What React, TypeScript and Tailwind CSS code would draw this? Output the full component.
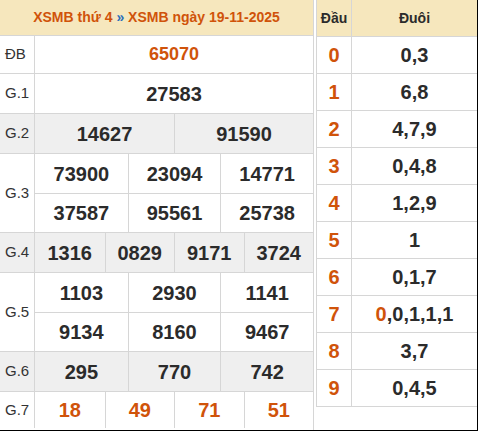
import React from 'react';

const ORANGE = 'text-[#d0530a]';

type Row = { label: string; lines: string[][]; gray?: boolean; red?: boolean; h?: string };

const rows: Row[] = [
  { label: 'ĐB', lines: [['65070']], red: true, h: 'h-[37px]' },
  { label: 'G.1', lines: [['27583']] },
  { label: 'G.2', lines: [['14627', '91590']], gray: true },
  { label: 'G.3', lines: [['73900', '23094', '14771'], ['37587', '95561', '25738']] },
  { label: 'G.4', lines: [['1316', '0829', '9171', '3724']], gray: true },
  { label: 'G.5', lines: [['1103', '2930', '1141'], ['9134', '8160', '9467']] },
  { label: 'G.6', lines: [['295', '770', '742']], gray: true },
  { label: 'G.7', lines: [['18', '49', '71', '51']], red: true, h: 'h-[36px]' },
];

const loto: [string, React.ReactNode][] = [
  ['0', '0,3'],
  ['1', '6,8'],
  ['2', '4,7,9'],
  ['3', '0,4,8'],
  ['4', '1,2,9'],
  ['5', '1'],
  ['6', '0,1,7'],
  ['7', <><span className={ORANGE}>0</span>,0,1,1,1</>],
  ['8', '3,7'],
  ['9', '0,4,5'],
];

const colClass: Record<number, string> = {
  1: 'grid-cols-1',
  2: 'grid-cols-2',
  3: 'grid-cols-3',
  4: 'grid-cols-4',
};

export default function App() {
  return (
    <div
      className="w-[478px] h-[431px] bg-white flex border-r border-b border-black overflow-hidden"
      style={{ fontFamily: '"Liberation Sans", Arial, sans-serif' }}
    >
      {/* results table */}
      <div className="w-[314px] border-r border-[#d6d6d6] flex flex-col">
        <div className="h-[35px] bg-[#f6e7bd] flex items-center justify-center text-[14px] font-bold text-[#d0530a]">
          XSMB thứ 4&nbsp;<span className="text-[#2a6ebb]">»</span>&nbsp;XSMB ngày 19-11-2025
        </div>
        {rows.map((row) => (
          <div
            key={row.label}
            className={`flex border-t border-[#d6d6d6] ${row.gray ? 'bg-[#efefef]' : 'bg-white'}`}
          >
            <div className="w-[35px] border-r border-[#d6d6d6] flex items-center pl-[5px] text-[15px] text-[#333]">
              {row.label}
            </div>
            <div className="flex-1 flex flex-col">
              {row.lines.map((line, i) => (
                <div
                  key={i}
                  className={`grid ${colClass[line.length]} ${i > 0 ? 'border-t border-[#d6d6d6]' : ''} ${row.h ?? 'h-[39px]'}`}
                >
                  {line.map((n, j) => (
                    <div
                      key={j}
                      className={`flex items-center justify-center font-bold ${row.label === 'ĐB' ? 'text-[18px]' : 'text-[20px]'} ${row.red ? ORANGE : 'text-[#2b2b2b]'} ${j > 0 ? 'border-l border-[#d6d6d6]' : ''}`}
                    >
                      {n}
                    </div>
                  ))}
                </div>
              ))}
            </div>
          </div>
        ))}
      </div>

      {/* loto table */}
      <div className="ml-[2px] flex-1 self-start border-l border-b border-[#d6d6d6] flex flex-col">
        <div className="h-[36px] bg-[#f6e7bd] flex text-[14px] font-bold text-[#2b2b2b]">
          <div className="w-[35px] border-r border-[#d6d6d6] flex items-center justify-center">Đầu</div>
          <div className="flex-1 flex items-center justify-center">Đuôi</div>
        </div>
        {loto.map(([d, t]) => (
          <div key={d} className="h-[37px] flex border-t border-[#d6d6d6] text-[20px] font-bold">
            <div className={`w-[35px] border-r border-[#d6d6d6] flex items-center justify-center ${ORANGE}`}>{d}</div>
            <div className="flex-1 flex items-center justify-center text-[#2b2b2b]">{t}</div>
          </div>
        ))}
      </div>
    </div>
  );
}
